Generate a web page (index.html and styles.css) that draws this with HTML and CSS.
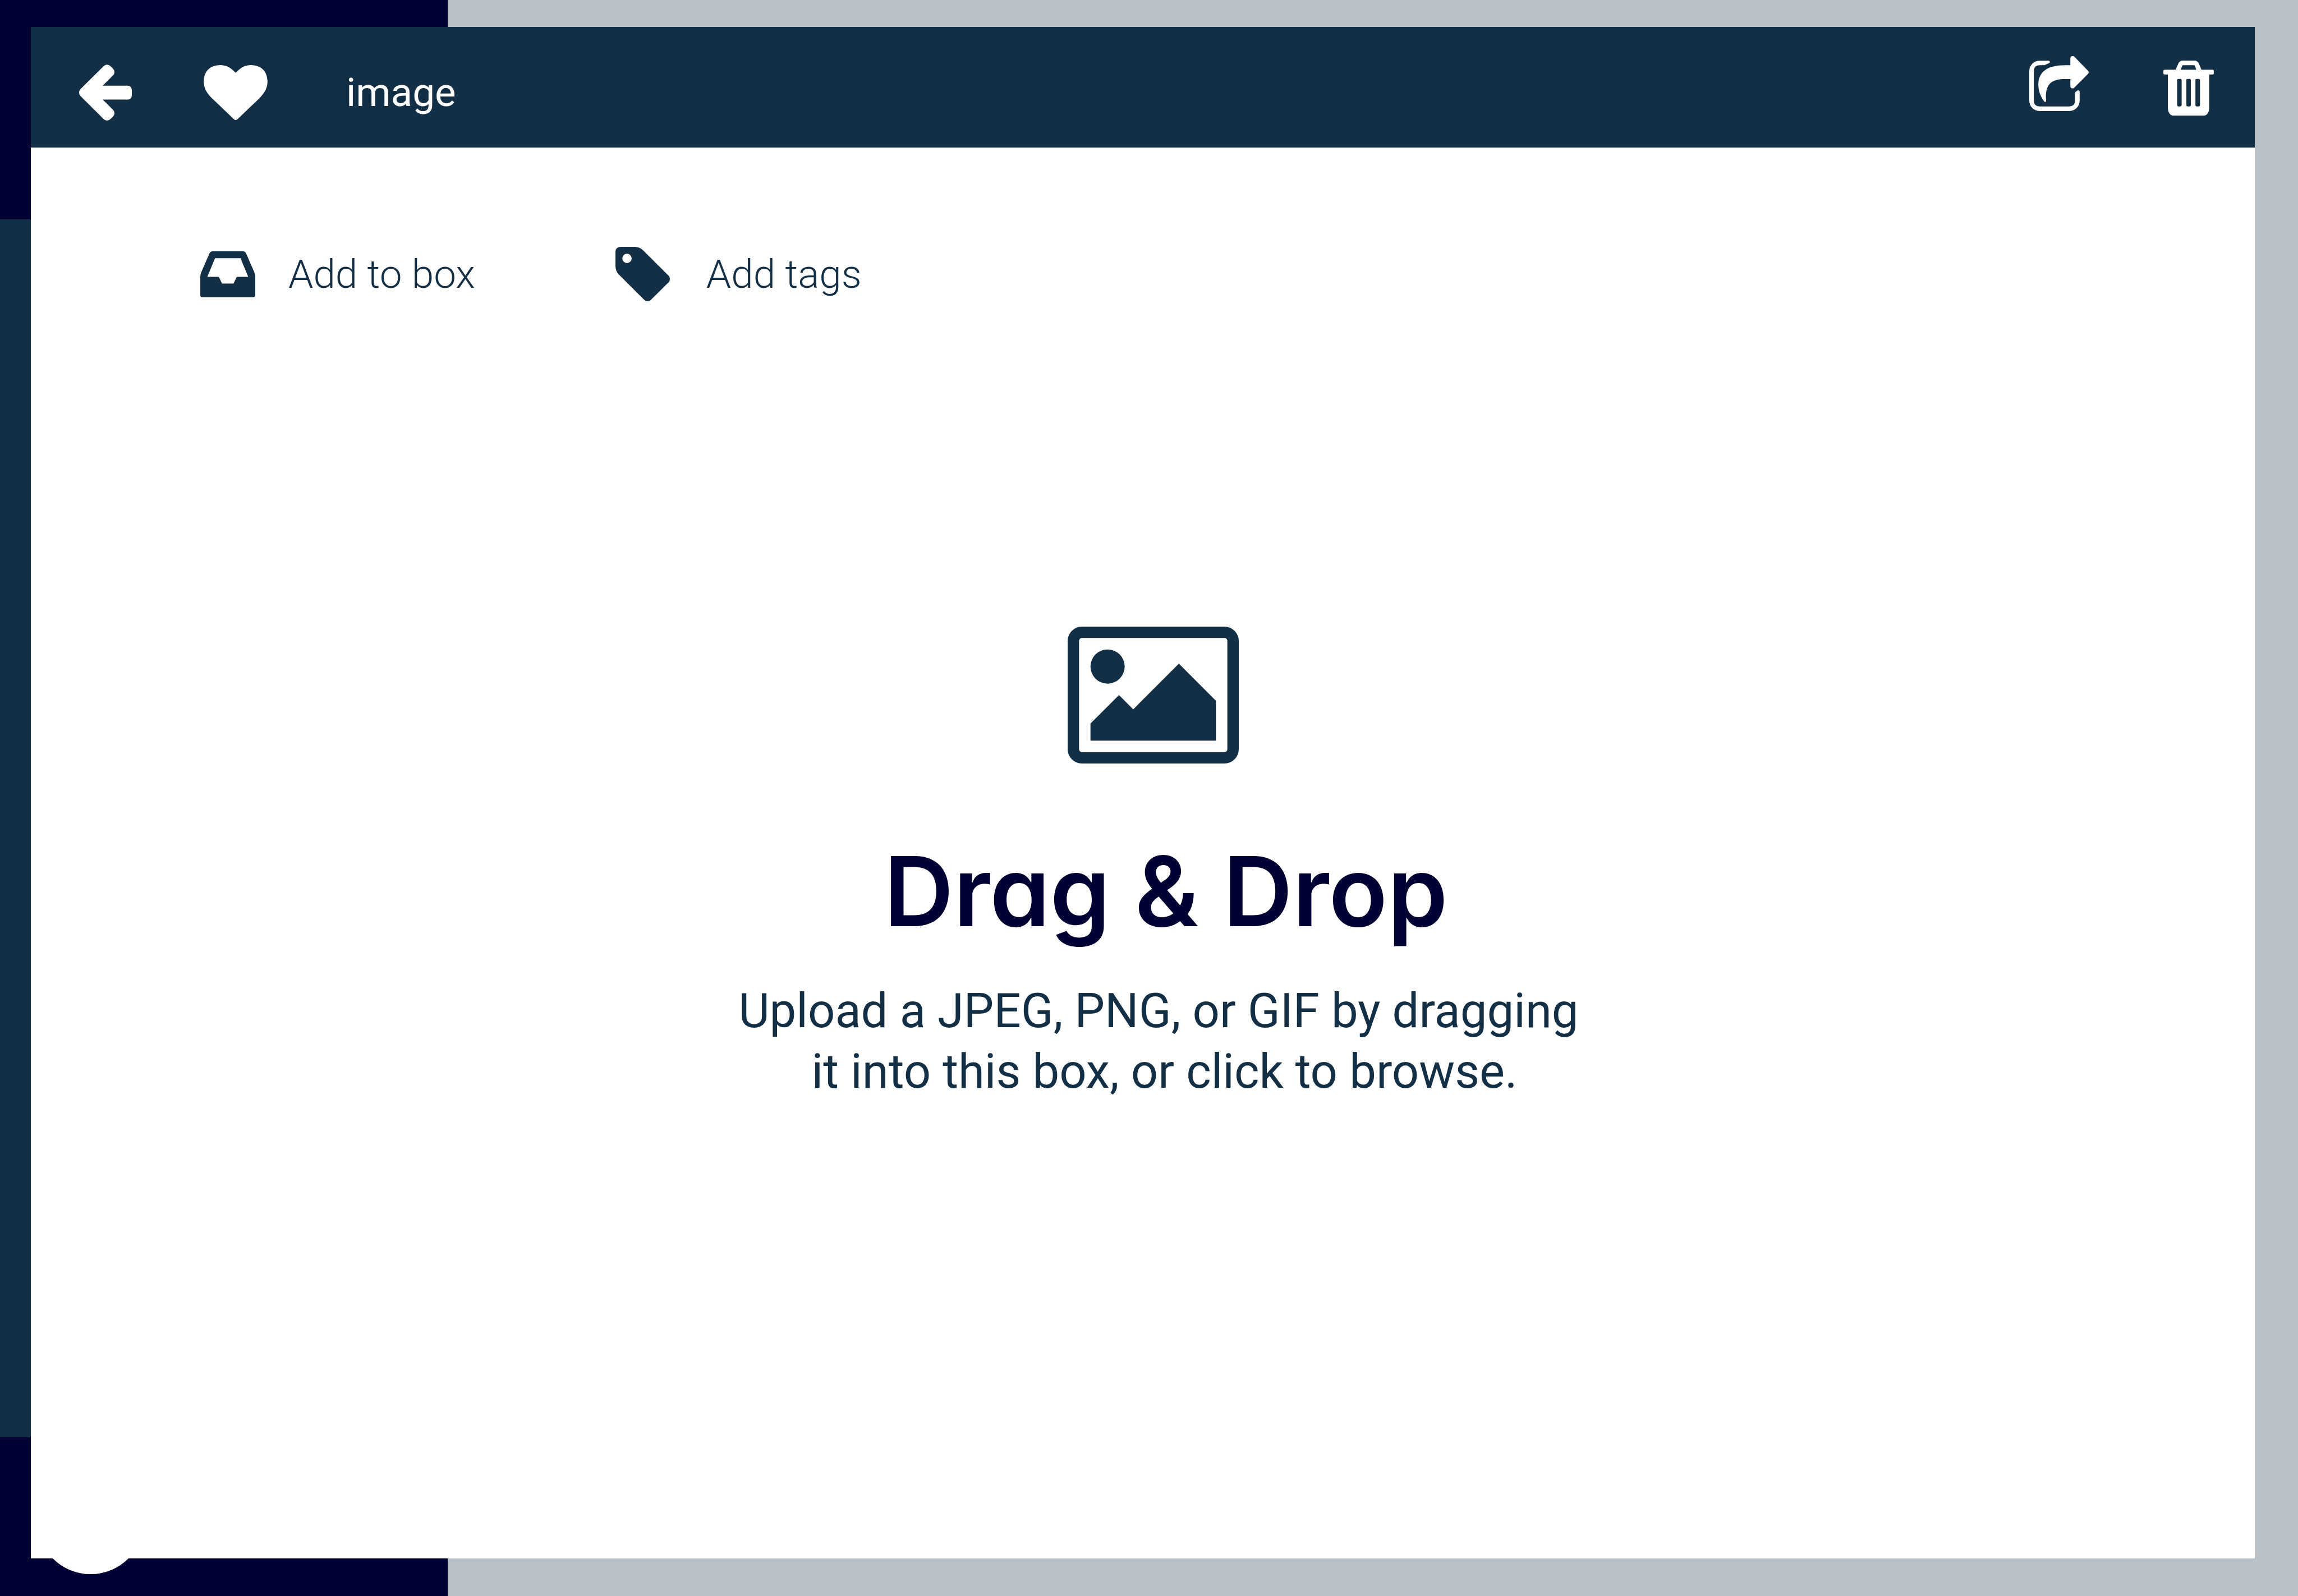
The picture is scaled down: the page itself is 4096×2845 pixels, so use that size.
FILE: index.html
```html
<!DOCTYPE html>
<html lang="en">
<head>
<meta charset="utf-8">
<meta name="viewport" content="width=device-width, initial-scale=1">
<title>image</title>
<link rel="stylesheet" href="styles.css">
</head>
<body>
<div class="app">
  <aside class="sidebar">
    <div class="sidebar-top"></div>
    <div class="sidebar-list"></div>
    <div class="sidebar-bottom"><div class="sidebar-avatar"></div></div>
  </aside>

  <main class="dialog">
    <header class="titlebar">
      <div class="titlebar-start">
        <button class="icon-button" type="button" aria-label="Back">
          <svg class="icon-back" viewBox="80 114 413 438" aria-hidden="true"><path d="M89 308L272 126Q284 114 298 114Q314 114 325 125L345 145Q357 157 357 173Q357 187 345 199L265 279H462Q475 279 484 289Q493 299 493 312V354Q493 368 484 378Q475 388 462 388H265L345 467Q357 479 357 495Q357 510 345 522L325 541Q314 552 298 552Q284 552 272 541L90 359Q80 349 80 334Q80 318 89 308Z"/></svg>
        </button>
        <button class="icon-button" type="button" aria-label="Favorite">
          <svg class="icon-heart" viewBox="153 156 501 432" aria-hidden="true"><path d="M404 217C426 195 462 156 521 156C605 156 654 206 654 289C654 338 624 382 591 416L417 582Q411 588 404 588Q397 588 391 582L216 415C182 382 153 338 153 289C153 206 201 156 285 156C345 156 382 195 404 217Z"/></svg>
        </button>
        <h1 class="title">image</h1>
      </div>
      <div class="titlebar-end">
        <button class="icon-button" type="button" aria-label="Share">
          <svg class="icon-share" viewBox="54 49 466 431" aria-hidden="true"><path d="M376 121V68Q376 49 394 49Q402 49 408 55L514 163Q520 169 520 176Q520 183 514 189L408 295Q402 302 394 302Q376 302 376 284V229H331C226 229 175 270 186 397Q187 409 179 409Q174 409 171 404C158 386 125 337 125 275C125 171 199 121 331 121Z"/><path d="M135 85H206Q216 85 216 96Q216 102 207 105Q190 111 176 119Q172 121 167 121H135Q90 121 90 166V399Q90 444 135 444H367Q412 444 412 399V340Q412 333 418 329Q425 325 430 320Q436 316 442 318Q449 320 449 328V399Q449 433 425 456Q401 480 367 480H135Q101 480 78 456Q54 433 54 399V166Q54 132 78 108Q101 85 135 85Z"/></svg>
        </button>
        <button class="icon-button icon-button-trash" type="button" aria-label="Delete">
          <svg class="icon-trash" viewBox="54 55 395 431" aria-hidden="true"><path fill-rule="evenodd" d="M63 127H150L170 80Q181 55 206 55H296Q322 55 333 80L352 127H440Q449 127 449 136V155Q449 164 440 164H413V430Q413 454 401 470Q389 486 373 486H130Q113 486 101 470Q89 454 89 430V164H63Q54 164 54 155V136Q54 127 63 127ZM190 127H312L300 96Q298 91 292 91H209Q204 91 202 96ZM171 199Q162 199 162 208V405Q162 414 171 414H188Q197 414 197 405V208Q197 199 188 199ZM243 199Q234 199 234 208V405Q234 414 243 414H260Q269 414 269 405V208Q269 199 260 199ZM314 199Q305 199 305 208V405Q305 414 314 414H332Q341 414 341 405V208Q341 199 332 199Z"/></svg>
        </button>
      </div>
    </header>

    <div class="actions">
      <button class="action" type="button">
        <svg class="icon-inbox" viewBox="69 78 429 359" aria-hidden="true"><path fill-rule="evenodd" d="M165 78H402Q419 78 427 95L490 240Q498 259 498 274V419Q498 437 480 437H87Q69 437 69 419V274Q69 259 77 240L140 95Q148 78 165 78ZM184 132L124 277H213L239 330H328L354 277H443L383 132Z"/></svg>
        Add to box
      </button>
      <button class="action action-tags" type="button">
        <svg class="icon-tag" viewBox="51 43 425 425" aria-hidden="true"><path fill-rule="evenodd" d="M87 43H204Q241 45 267 70L465 268Q476 279 476 295Q476 310 465 321L328 457Q317 468 301 468Q286 468 276 457L77 259Q53 234 51 196V79Q51 64 62 54Q72 43 87 43ZM141 97A36.500 36.500 0 1 0 141 170A36.500 36.500 0 1 0 141 97Z"/></svg>
        Add tags
      </button>
    </div>

    <label class="dropzone">
      <input class="file-input" type="file" accept="image/jpeg,image/png,image/gif">
      <svg class="icon-picture" viewBox="0 0 60 48" aria-hidden="true"><path fill-rule="evenodd" d="M5 0H55A5 5 0 0 1 60 5V43A5 5 0 0 1 55 48H5A5 5 0 0 1 0 43V5A5 5 0 0 1 5 0ZM5 4A1 1 0 0 0 4 5V43A1 1 0 0 0 5 44H55A1 1 0 0 0 56 43V5A1 1 0 0 0 55 4Z"/><circle cx="14" cy="14" r="6"/><path d="M8 34L18 24L23 29L39 13L52 26V40H8Z"/></svg>
      <span class="dropzone-heading">Drag &amp; Drop</span>
      <span class="dropzone-text">Upload a JPEG, PNG, or GIF by dragging<br>&nbsp;it into this box, or click to browse.</span>
    </label>
  </main>
</div>
</body>
</html>
```
FILE: styles.css
```css
:root {
  --navy: #000032;
  --teal: #132f45;
  --grey: #b8c0c8;
  --white: #ffffff;
}

* {
  box-sizing: border-box;
}

body {
  margin: 0;
  background: var(--grey);
  color: var(--teal);
  font-family: Roboto, "Liberation Sans", sans-serif;
}

svg {
  display: block;
  flex: none;
  fill: currentColor;
}

.app {
  position: relative;
  display: flex;
  min-height: 100vh;
}

/* Sidebar behind the dialog */
.sidebar {
  display: flex;
  flex-direction: column;
  width: 798px;
  background: var(--navy);
}

.sidebar-top {
  height: 391px;
}

.sidebar-list {
  flex: 1;
  background: var(--teal);
}

.sidebar-bottom {
  display: flex;
  align-items: flex-end;
  height: 283px;
  padding: 0 66px 39px;
}

.sidebar-avatar {
  width: 191px;
  height: 191px;
  border-radius: 50%;
  background: var(--white);
}

/* Dialog laid over the page */
.dialog {
  position: absolute;
  inset: 48px 77px 67px 55px;
  display: flex;
  flex-direction: column;
  background: var(--white);
}

.titlebar {
  display: flex;
  justify-content: space-between;
  align-items: flex-start;
  min-height: 215px;
  padding: 52px 73px 0 86px;
  background: var(--teal);
  color: var(--white);
}

.titlebar-start {
  display: flex;
  align-items: center;
  gap: 128px;
  margin-top: 15px;
}

.titlebar-end {
  display: flex;
  align-items: flex-start;
  gap: 133px;
}

.icon-button {
  padding: 0;
  border: 0;
  background: none;
  color: inherit;
  cursor: pointer;
}

.icon-button-trash {
  margin-top: 8px;
}

.icon-back {
  width: 94px;
  height: 100px;
}

.icon-heart {
  width: 114px;
  height: 98px;
}

.icon-share {
  width: 106px;
  height: 98px;
}

.icon-trash {
  width: 90px;
  height: 98px;
}

.title {
  margin: 0 0 0 12px;
  font-size: 71px;
  font-weight: 400;
  line-height: 96px;
}

.actions {
  display: flex;
  gap: 250px;
  padding: 177px 302px 0;
}

.action {
  display: flex;
  align-items: center;
  gap: 59px;
  padding: 0;
  border: 0;
  background: none;
  color: inherit;
  font-family: inherit;
  font-size: 71px;
  font-weight: 300;
  line-height: 97px;
  cursor: pointer;
}

.action-tags {
  gap: 65px;
}

.icon-inbox {
  width: 98px;
  height: 82px;
}

.icon-tag {
  width: 97px;
  height: 97px;
}

.dropzone {
  display: flex;
  flex: 1;
  flex-direction: column;
  justify-content: center;
  align-items: center;
  padding: 0 0 234px 56px;
  text-align: center;
  cursor: pointer;
}

.file-input {
  position: absolute;
  width: 1px;
  height: 1px;
  opacity: 0;
}

.icon-picture {
  width: 305px;
  height: 244px;
  margin-right: 20px;
}

.dropzone-heading {
  margin: 137px 0 70px 26px;
  color: var(--navy);
  font-family: Inter, "Open Sans", sans-serif;
  font-size: 172px;
  font-weight: 600;
  font-feature-settings: "cv11";
  line-height: 180px;
}

.dropzone-text {
  font-size: 85px;
  line-height: 108px;
}
```
